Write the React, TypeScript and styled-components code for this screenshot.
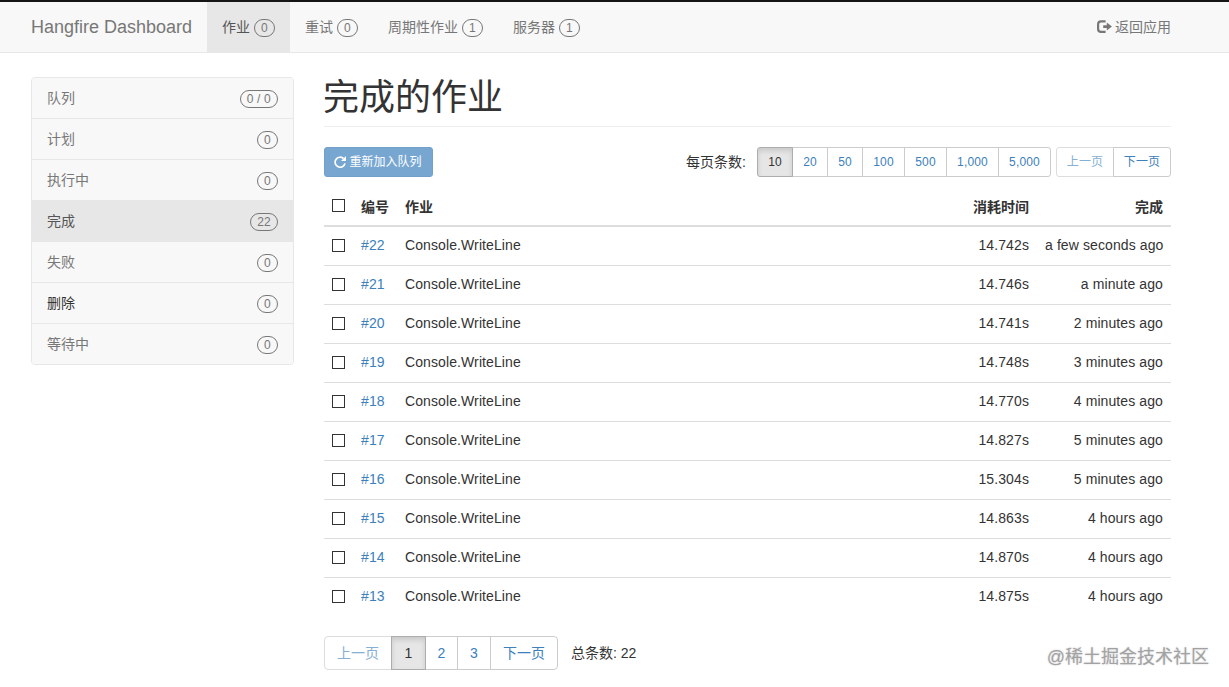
import React from "react";
import styled, { createGlobalStyle, css } from "styled-components";

const GlobalStyle = createGlobalStyle`
  *, *::before, *::after { box-sizing: border-box; }
  html, body { margin: 0; background: #fff; }
  body {
    font-family: "Liberation Sans", "Noto Sans CJK SC", sans-serif;
    font-size: 14px;
    line-height: 20px;
    color: #333;
  }
  a { color: #3c80bc; text-decoration: none; }
`;

const Page = styled.div`
  position: relative;
  height: 687px;
  overflow: hidden;
  border-top: 2px solid #151515;
`;

const Navbar = styled.nav`
  height: 51px;
  padding: 0 58px 0 31px;
  display: flex;
  background: #f8f8f8;
  border-bottom: 1px solid #e7e7e7;
`;

const Brand = styled.a`
  width: 176px;
  padding-top: 15px;
  font-size: 18px;
  white-space: nowrap;
  color: #777;
`;

const NavLink = styled.a<{ $active?: boolean }>`
  display: flex;
  align-items: center;
  gap: 4px;
  padding: 0 15px;
  color: ${(p) => (p.$active ? "#555" : "#777")};
  background: ${(p) => (p.$active ? "#e7e7e7" : "transparent")};
`;

const Leave = styled.a`
  display: flex;
  align-items: center;
  gap: 3px;
  margin-left: auto;
  color: #777;
`;

const Badge = styled.span`
  min-width: 21px;
  height: 18px;
  margin-top: 2px;
  padding: 0 6px;
  border: 1px solid #777;
  border-radius: 10px;
  font-size: 12px;
  line-height: 16px;
  letter-spacing: 0.2px;
  text-align: center;
  color: #777;
`;

const Columns = styled.div`
  display: flex;
  align-items: flex-start;
  width: 1140px;
  margin-left: 31px;
`;

const Sidebar = styled.aside`
  width: 263px;
  margin: 24px 30px 0 0;
  border: 1px solid #e7e7e7;
  border-radius: 4px;
  overflow: hidden;
`;

const SideItem = styled.a<{ $active?: boolean; $dark?: boolean }>`
  display: flex;
  align-items: center;
  justify-content: space-between;
  height: 41px;
  padding: 0 15px;
  color: ${(p) => (p.$dark ? "#333" : p.$active ? "#555" : "#777")};
  background: ${(p) => (p.$active ? "#e7e7e7" : "#f8f8f8")};
  border-bottom: 1px solid #e7e7e7;
  &:last-child { border-bottom: 0; height: 40px; }
`;

const Main = styled.main`
  width: 847px;
`;

const Title = styled.h1`
  height: 74px;
  margin: 0 0 20px;
  padding-top: 25px;
  font-size: 36px;
  font-weight: 400;
  line-height: 40px;
  text-indent: -1px;
  border-bottom: 1px solid #eee;
`;

const Toolbar = styled.div`
  display: flex;
  align-items: center;
  height: 30px;
`;

const Requeue = styled.button`
  display: flex;
  align-items: center;
  justify-content: center;
  gap: 2px;
  width: 109px;
  height: 30px;
  padding: 0 1px 0 0;
  font: 12px/18px "Liberation Sans", "Noto Sans CJK SC", sans-serif;
  color: #fff;
  background: #77a7d1;
  border: 1px solid #72a0ca;
  border-radius: 3px;
`;

const PerPage = styled.span`
  margin: 0 11px 0 auto;
`;

const Group = styled.div<{ $large?: boolean }>`
  display: flex;
  font-size: ${(p) => (p.$large ? 14 : 12)}px;
  letter-spacing: ${(p) => (p.$large ? 0 : 0.15)}px;
  --height: ${(p) => (p.$large ? 34 : 30)}px;
  --radius: ${(p) => (p.$large ? 4 : 3)}px;
  & + & { margin-left: 5px; }
`;

const Cell = styled.a<{ $w: number; $active?: boolean; $muted?: boolean }>`
  display: flex;
  align-items: center;
  justify-content: center;
  width: ${(p) => p.$w}px;
  height: var(--height);
  margin-left: -1px;
  border: 1px solid #ccc;
  &:first-child { margin-left: 0; border-radius: var(--radius) 0 0 var(--radius); }
  &:last-child { border-radius: 0 var(--radius) var(--radius) 0; }
  ${(p) => p.$muted && css`color: #85afd4; border-color: #ddd;`}
  ${(p) =>
    p.$active &&
    css`
      z-index: 1;
      color: #333;
      background: #e6e6e6;
      border-color: #adadad;
      box-shadow: inset 0 3px 5px rgba(0, 0, 0, 0.125);
    `}
`;

const Table = styled.table`
  width: 847px;
  margin-top: 11px;
  table-layout: fixed;
  border-collapse: separate;
  border-spacing: 0;
`;

const Th = styled.th<{ $w?: number; $right?: boolean }>`
  width: ${(p) => (p.$w ? `${p.$w}px` : "auto")};
  height: 39px;
  padding: 0 8px;
  text-align: ${(p) => (p.$right ? "right" : "left")};
  border-bottom: 2px solid #ddd;
`;

const Td = styled.td<{ $right?: boolean }>`
  height: 39px;
  padding: 0 8px 2px;
  white-space: nowrap;
  letter-spacing: 0.1px;
  text-align: ${(p) => (p.$right ? "right" : "left")};
  tr + tr > & { border-top: 1px solid #ddd; }
  tr:first-child > & { height: 38px; }
`;

const Check = styled.input.attrs({ type: "checkbox" })`
  appearance: none;
  display: block;
  width: 13px;
  height: 13px;
  margin: 0;
  background: #fff;
  border: 1px solid #333;
  th > & { margin-bottom: 2px; }
`;

const Footer = styled.div`
  display: flex;
  align-items: center;
  gap: 13px;
  margin-top: 20px;
`;

const Watermark = styled.div`
  position: absolute;
  right: 20px;
  bottom: 18px;
  font-size: 18px;
  line-height: 24px;
  color: #a2a2a2;
  text-shadow: 0 0 2px #ccc;
`;

const LogoutIcon = () => (
  <svg width="15" height="14" viewBox="0 0 15 14">
    <path d="M8.6 1.4H4Q1.1 1.4 1.1 4.3V9Q1.1 11.9 4 11.9H8.6" fill="none" stroke="#777" strokeWidth="2.2" />
    <path d="M9.8 2.6L14.9 6.6L9.8 10.6V8H6.2V5.2H9.8Z" fill="#777" />
  </svg>
);

const RepeatIcon = () => (
  <svg width="13" height="12" viewBox="0 0 13 12">
    <path d="M9.5 2.5A5 5 0 1 0 11 7.4" fill="none" stroke="#fff" strokeWidth="1.7" />
    <path d="M12 0V5H7Z" fill="#fff" />
  </svg>
);

const nav = [
  { label: "作业", count: 0, active: true },
  { label: "重试", count: 0 },
  { label: "周期性作业", count: 1 },
  { label: "服务器", count: 1 },
];

const side = [
  { label: "队列", count: "0 / 0" },
  { label: "计划", count: "0" },
  { label: "执行中", count: "0" },
  { label: "完成", count: "22", active: true },
  { label: "失败", count: "0" },
  { label: "删除", count: "0", dark: true },
  { label: "等待中", count: "0" },
];

const sizes: [string, number][] = [
  ["10", 36],
  ["20", 36],
  ["50", 36],
  ["100", 43],
  ["500", 43],
  ["1,000", 53],
  ["5,000", 53],
];

const jobs = [
  ["#22", "14.742s", "a few seconds ago"],
  ["#21", "14.746s", "a minute ago"],
  ["#20", "14.741s", "2 minutes ago"],
  ["#19", "14.748s", "3 minutes ago"],
  ["#18", "14.770s", "4 minutes ago"],
  ["#17", "14.827s", "5 minutes ago"],
  ["#16", "15.304s", "5 minutes ago"],
  ["#15", "14.863s", "4 hours ago"],
  ["#14", "14.870s", "4 hours ago"],
  ["#13", "14.875s", "4 hours ago"],
];

export default function App() {
  return (
    <Page>
      <GlobalStyle />
      <Navbar>
        <Brand>Hangfire Dashboard</Brand>
        {nav.map((n) => (
          <NavLink key={n.label} $active={n.active}>
            {n.label}
            <Badge>{n.count}</Badge>
          </NavLink>
        ))}
        <Leave>
          <LogoutIcon />
          返回应用
        </Leave>
      </Navbar>
      <Columns>
        <Sidebar>
          {side.map((s) => (
            <SideItem key={s.label} $active={s.active} $dark={s.dark}>
              {s.label}
              <Badge>{s.count}</Badge>
            </SideItem>
          ))}
        </Sidebar>
        <Main>
          <Title>完成的作业</Title>
          <Toolbar>
            <Requeue>
              <RepeatIcon />
              重新加入队列
            </Requeue>
            <PerPage>每页条数:</PerPage>
            <Group>
              {sizes.map(([label, w], i) => (
                <Cell key={label} $w={w} $active={i === 0}>
                  {label}
                </Cell>
              ))}
            </Group>
            <Group>
              <Cell $w={58} $muted>上一页</Cell>
              <Cell $w={58}>下一页</Cell>
            </Group>
          </Toolbar>
          <Table>
            <thead>
              <tr>
                <Th $w={29}><Check /></Th>
                <Th $w={44}>编号</Th>
                <Th>作业</Th>
                <Th $w={90} $right>消耗时间</Th>
                <Th $w={134} $right>完成</Th>
              </tr>
            </thead>
            <tbody>
              {jobs.map(([id, duration, done]) => (
                <tr key={id}>
                  <Td><Check /></Td>
                  <Td><a>{id}</a></Td>
                  <Td>Console.WriteLine</Td>
                  <Td $right>{duration}</Td>
                  <Td $right>{done}</Td>
                </tr>
              ))}
            </tbody>
          </Table>
          <Footer>
            <Group $large>
              <Cell $w={68} $muted>上一页</Cell>
              <Cell $w={35} $active>1</Cell>
              <Cell $w={33}>2</Cell>
              <Cell $w={34}>3</Cell>
              <Cell $w={68}>下一页</Cell>
            </Group>
            <span>总条数: 22</span>
          </Footer>
        </Main>
      </Columns>
      <Watermark>@稀土掘金技术社区</Watermark>
    </Page>
  );
}
